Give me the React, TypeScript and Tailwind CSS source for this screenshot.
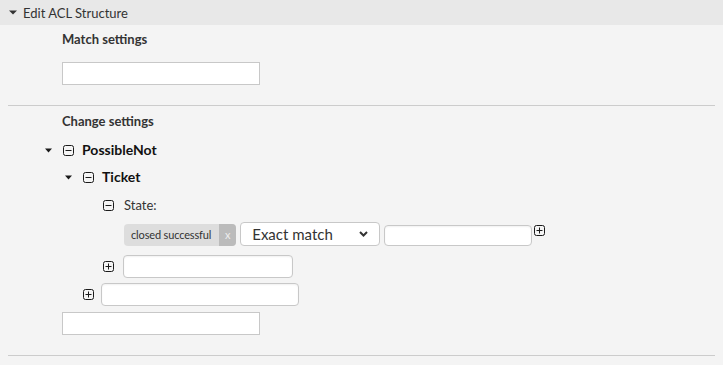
const ink = "#1a1a1a";

function Caret() {
  return (
    <svg width="7" height="5" viewBox="0 0 7 5" className="shrink-0">
      <path d="M0 0.5h7L3.5 4.5z" fill={ink} />
    </svg>
  );
}

function BoxIcon({ plus }: { plus?: boolean }) {
  return (
    <svg width="11" height="11" viewBox="0 0 11 11" className="block shrink-0">
      <rect x="0.5" y="0.5" width="10" height="10" rx="2" fill="none" stroke={ink} />
      <path d="M2.5 5.5h6" stroke={ink} />
      {plus && <path d="M5.5 2.5v6" stroke={ink} />}
    </svg>
  );
}

function RoundInput({ w, h = "h-[23px]" }: { w: string; h?: string }) {
  return (
    <input
      type="text"
      className={`block ${w} ${h} rounded-[4px] border border-[#c8c8c8] bg-white shadow-[inset_0_1px_2px_rgba(0,0,0,0.06)] outline-none`}
    />
  );
}

export default function App() {
  return (
    <div className="h-[365px] w-[723px] overflow-hidden bg-[#f4f4f4] font-['Lato',sans-serif] text-[#333]">
      <div className="flex h-[25px] items-center gap-[6px] bg-[#e8e8e8] pl-[9px]">
        <svg width="8" height="5" viewBox="0 0 8 5">
          <path d="M0 0.5h8L4 4.5z" fill="#333" />
        </svg>
        <span className="text-[13px] leading-[16px]">Edit ACL Structure</span>
      </div>

      <div className="px-[8px]">
        <div className="pl-[54px] pt-[6px]">
          <h3 className="text-[13px] font-bold leading-[16px]">Match settings</h3>
          <input type="text" className="mt-[15px] block h-[23px] w-[198px] border border-[#c8c8c8] bg-white outline-none" />
        </div>

        <div className="mt-[20px] border-t border-[#cccccc]" />

        <h3 className="pl-[54px] pt-[7px] text-[13px] font-bold leading-[16px]">Change settings</h3>

        <div className="mt-[13px] pl-[37px] text-[#111]">
          <div className="flex h-[16px] items-center">
            <Caret />
            <span className="ml-[11px]"><BoxIcon /></span>
            <span className="ml-[8px] text-[14px] font-bold leading-[16px]">PossibleNot</span>
          </div>

          <div className="mt-[11px] flex h-[16px] items-center pl-[20px]">
            <Caret />
            <span className="ml-[11px]"><BoxIcon /></span>
            <span className="ml-[8px] text-[14px] font-bold leading-[16px]">Ticket</span>
          </div>

          <div className="mt-[12px] flex h-[16px] items-center pl-[58px]">
            <BoxIcon />
            <span className="ml-[10px] text-[13px] leading-[16px] text-[#333]">State:</span>
          </div>

          <div className="mt-[9px] flex h-[24px] items-start pl-[79px]">
            <div className="mt-[2px] flex h-[22px] items-stretch overflow-hidden rounded-[4px] bg-[#dddddd]">
              <span className="flex items-center pl-[7px] pr-[8px] text-[11px] tracking-[-0.15px] text-[#333]">closed successful</span>
              <span className="flex w-[17px] items-center justify-center bg-[#bbbbbb] text-[11px] text-[#eeeeee]">x</span>
            </div>
            <div className="ml-[4px] flex h-[24px] w-[140px] items-center justify-between rounded-[4px] border border-[#c8c8c8] bg-white pl-[11px] pr-[11px]">
              <span className="text-[15px] leading-[18px] text-[#333]">Exact match</span>
              <svg width="9" height="6" viewBox="0 0 9 6">
                <path d="M1 1l3.5 3.5L8 1" fill="none" stroke="#333" strokeWidth="2" />
              </svg>
            </div>
            <div className="ml-[4px] mt-[3px]"><RoundInput w="w-[148px]" h="h-[21px]" /></div>
            <div className="ml-[2px] mt-[3px]"><BoxIcon plus /></div>
          </div>

          <div className="mt-[9px] flex items-center pl-[58px]">
            <BoxIcon plus />
            <div className="ml-[9px]"><RoundInput w="w-[170px]" /></div>
          </div>

          <div className="mt-[5px] flex items-center pl-[38px]">
            <BoxIcon plus />
            <div className="ml-[7px]"><RoundInput w="w-[198px]" /></div>
          </div>

          <div className="mt-[6px] pl-[17px]">
            <input type="text" className="block h-[23px] w-[198px] border border-[#c8c8c8] bg-white outline-none" />
          </div>
        </div>

        <div className="mt-[20px] border-t border-[#cccccc]" />
      </div>
    </div>
  );
}
